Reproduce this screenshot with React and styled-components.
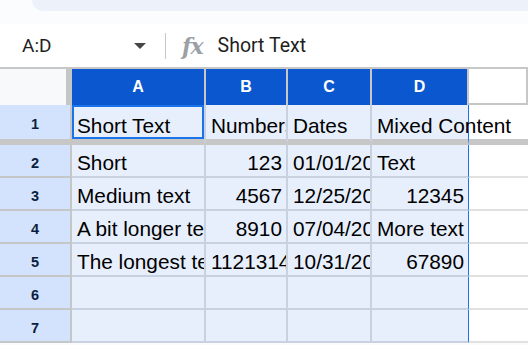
import React from 'react';
import styled, { createGlobalStyle } from 'styled-components';

const GlobalStyle = createGlobalStyle`
  body {
    margin: 0;
    background: #ffffff;
    font-family: "Liberation Sans", Arial, sans-serif;
  }
`;

const Page = styled.div`
  width: 528px;
  height: 345px;
  overflow: hidden;
  background: #f9fbfd;
  display: flex;
  flex-direction: column;
`;

const TopStrip = styled.div`
  height: 24px;
  padding-left: 32px;
  background: #fbfcfe;
`;

const ToolbarEdge = styled.div`
  height: 11px;
  background: #edf2fa;
  border-bottom-left-radius: 12px;
`;

const FormulaBar = styled.div`
  height: 43px;
  background: #ffffff;
  display: flex;
  align-items: center;
`;

const NameBox = styled.div`
  width: 165px;
  box-sizing: border-box;
  padding: 0 19px 0 22px;
  display: flex;
  align-items: center;
  justify-content: space-between;
  font-family: Roboto, "Liberation Sans", sans-serif;
  font-size: 19px;
  color: #1f1f1f;
`;

const Caret = styled.span`
  width: 0;
  height: 0;
  border-left: 6px solid transparent;
  border-right: 6px solid transparent;
  border-top: 6px solid #444746;
`;

const Divider = styled.div`
  width: 1px;
  height: 26px;
  background: #c7c7c7;
`;

const Fx = styled.span`
  margin-left: 16px;
  font-family: "DejaVu Serif", "Liberation Serif", serif;
  font-style: italic;
  font-weight: bold;
  font-size: 22px;
  color: #9aa0a6;
  letter-spacing: -1px;
`;

const FormulaText = styled.span`
  margin-left: 15px;
  font-family: Roboto, "Liberation Sans", sans-serif;
  font-size: 19.5px;
  color: #1f1f1f;
`;

const Grid = styled.div`
  display: grid;
  grid-template-columns: 72px 134px 82px 84px 97px 1fr;
  grid-auto-rows: 33px;
  grid-template-rows: 36px 40px;
  border-top: 2px solid #c7c7c7;
  background: #ffffff;
`;

const Corner = styled.div`
  background: #f8f9fa;
  border-right: 6px solid #c4c7c5;
`;

const ColHead = styled.div`
  box-sizing: border-box;
  display: flex;
  align-items: center;
  justify-content: center;
  font-weight: bold;
  font-size: 16px;
  color: #ffffff;
  background: ${p => (p.$selected ? '#0b57d0' : '#ffffff')};
  border-right: 2px solid #c7c7c7;
  border-bottom: ${p => (p.$selected ? 'none' : '2px solid #c7c7c7')};
`;

const RowHead = styled.div`
  box-sizing: border-box;
  display: flex;
  align-items: center;
  justify-content: center;
  padding-top: 4px;
  font-weight: bold;
  font-size: 14.5px;
  color: #0b1e3e;
  background: #d3e3fd;
  border-right: 2px solid #c4c7c5;
  border-bottom: ${p => (p.$frozen ? '6px solid #c7c7c7' : '2px solid #c4c7c5')};
`;

const Cell = styled.div`
  box-sizing: border-box;
  display: flex;
  align-items: flex-end;
  justify-content: ${p => (p.$right ? 'flex-end' : 'flex-start')};
  padding: 0 4px 2px 5px;
  font-size: 20.8px;
  line-height: 23px;
  color: #000000;
  white-space: nowrap;
  overflow: ${p => (p.$spill ? 'visible' : 'hidden')};
  position: relative;
  z-index: ${p => (p.$spill ? 2 : 'auto')};
  background: ${p => (p.$outside ? '#ffffff' : '#e7effd')};
  border-right: ${p =>
    p.$edge ? '1px solid #1a73e8' : p.$outside ? 'none' : '2px solid #c8d1df'};
  border-bottom: ${p =>
    p.$frozen ? '6px solid #c7c7c7' : p.$outside ? '2px solid #e1e1e1' : '2px solid #c8d1df'};
  box-shadow: ${p => (p.$active ? 'inset 0 0 0 2px #1a73e8' : 'none')};
`;

const headers = ['A', 'B', 'C', 'D'];

const frozenRow = ['Short Text', 'Numbers', 'Dates', 'Mixed Content'];

const rows = [
  [['Short'], ['123', 'r'], ['01/01/2023'], ['Text']],
  [['Medium text'], ['4567', 'r'], ['12/25/2023'], ['12345', 'r']],
  [['A bit longer text'], ['8910', 'r'], ['07/04/2023'], ['More text']],
  [['The longest text here'], ['11213141516'], ['10/31/2023'], ['67890', 'r']],
  [[''], [''], [''], ['']],
  [[''], [''], [''], ['']],
];

export default function App() {
  return (
    <Page>
      <GlobalStyle />
      <TopStrip>
        <ToolbarEdge />
      </TopStrip>
      <FormulaBar>
        <NameBox>
          <span>A:D</span>
          <Caret />
        </NameBox>
        <Divider />
        <Fx>fx</Fx>
        <FormulaText>Short Text</FormulaText>
      </FormulaBar>
      <Grid>
        <Corner />
        {headers.map(h => (
          <ColHead key={h} $selected>
            {h}
          </ColHead>
        ))}
        <ColHead />

        <RowHead $frozen>1</RowHead>
        {frozenRow.map((t, i) => (
          <Cell key={t} $frozen $active={i === 0} $edge={i === 3} $spill={i === 3}>
            {t}
          </Cell>
        ))}
        <Cell $frozen $outside />

        {rows.map((r, ri) => (
          <React.Fragment key={ri}>
            <RowHead>{ri + 2}</RowHead>
            {r.map(([t, a], ci) => (
              <Cell key={ci} $right={a === 'r'} $edge={ci === 3}>
                {t}
              </Cell>
            ))}
            <Cell $outside />
          </React.Fragment>
        ))}
      </Grid>
    </Page>
  );
}
